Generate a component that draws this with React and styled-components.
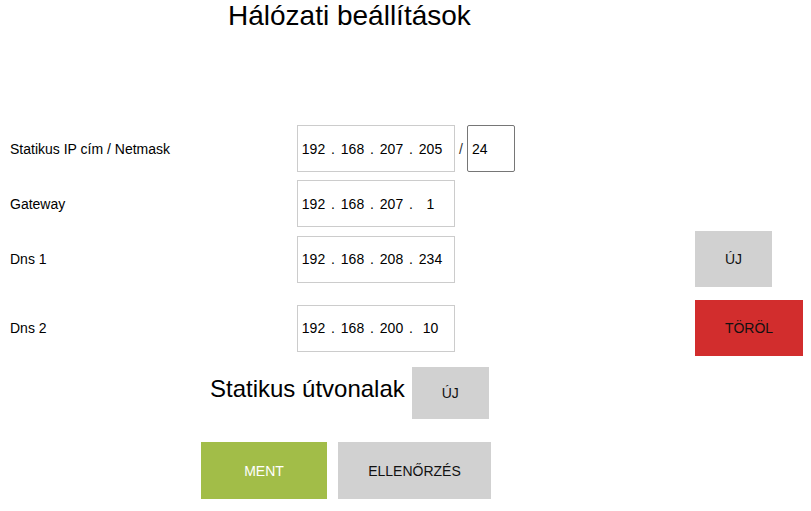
import React from 'react';
import styled, { createGlobalStyle } from 'styled-components';

const GlobalStyle = createGlobalStyle`
  body {
    margin: 0;
    font-family: "Liberation Sans", Arial, sans-serif;
    color: #000;
    background: #fff;
  }
`;

const rows = [
  { label: 'Statikus IP cím / Netmask', ip: ['192', '168', '207', '205'], mask: '24' },
  { label: 'Gateway', ip: ['192', '168', '207', '1'] },
  { label: 'Dns 1', ip: ['192', '168', '208', '234'], action: 'new', tall: true },
  { label: 'Dns 2', ip: ['192', '168', '200', '10'], action: 'delete', tall: true },
];

const IpField = ({ ip }) => (
  <IpBox>
    {ip.map((part, i) => (
      <React.Fragment key={i}>
        {i > 0 && <Dot>.</Dot>}
        <Octet defaultValue={part} />
      </React.Fragment>
    ))}
  </IpBox>
);

const App = () => {
  return (
    <Page>
      <GlobalStyle />
      <Title>Hálózati beállítások</Title>

      <Form>
        {rows.map((row) => (
          <Row key={row.label} $tall={row.tall}>
            <Label>{row.label}</Label>
            <Fields>
              <IpField ip={row.ip} />
              {row.mask && (
                <>
                  <Slash>/</Slash>
                  <Mask defaultValue={row.mask} />
                </>
              )}
            </Fields>
            <div>
              {row.action === 'new' && <Button $w={77}>ÚJ</Button>}
              {row.action === 'delete' && (
                <Button $w={108} $variant="danger">
                  TÖRÖL
                </Button>
              )}
            </div>
          </Row>
        ))}
      </Form>

      <Routes>
        <SubTitle>Statikus útvonalak</SubTitle>
        <Button $w={77} $h={52}>
          ÚJ
        </Button>
      </Routes>

      <Actions>
        <Button $w={126} $h={57} $variant="save">
          MENT
        </Button>
        <Button $w={153} $h={57}>
          ELLENŐRZÉS
        </Button>
      </Actions>
    </Page>
  );
};

const Page = styled.div`
  width: 811px;
`;

const Title = styled.h1`
  margin: 0;
  padding-left: 228px;
  font-size: 28px;
  line-height: 32px;
  font-weight: 400;
`;

const Form = styled.div`
  display: flex;
  flex-direction: column;
  margin-top: 93px;
`;

const Row = styled.div`
  display: grid;
  grid-template-columns: 297px 398px auto;
  align-items: center;
  height: ${(p) => (p.$tall ? '56px' : '47px')};
  margin-bottom: 8px;

  &:nth-child(2) {
    margin-bottom: 4px;
  }
  &:nth-child(3) {
    margin-bottom: 13px;
  }
`;

const Label = styled.span`
  padding-left: 10px;
  font-size: 14px;
`;

const Fields = styled.div`
  display: flex;
  align-items: center;
`;

const IpBox = styled.div`
  display: flex;
  align-items: center;
  box-sizing: border-box;
  width: 158px;
  height: 47px;
  border: 1px solid #cccccc;
  background: #fff;
`;

const Octet = styled.input`
  width: 31px;
  padding: 0;
  border: none;
  outline: none;
  background: transparent;
  text-align: center;
  font: 14px "Liberation Sans", Arial, sans-serif;
  color: #000;
`;

const Dot = styled.span`
  width: 8px;
  text-align: center;
  font-size: 14px;
`;

const Slash = styled.span`
  margin: 0 4px;
  width: 4px;
  font-size: 14px;
  color: #333;
`;

const Mask = styled.input`
  box-sizing: border-box;
  width: 48px;
  height: 47px;
  padding: 0 0 0 4px;
  border: 1px solid #767676;
  border-radius: 2px;
  outline: none;
  font: 14px "Liberation Sans", Arial, sans-serif;
  color: #000;
`;

const Button = styled.button`
  width: ${(p) => p.$w}px;
  height: ${(p) => p.$h || 56}px;
  padding: 0;
  border: none;
  border-radius: 0;
  cursor: pointer;
  font: 14px "Liberation Sans", Arial, sans-serif;
  background: ${(p) =>
    p.$variant === 'danger' ? '#d22d2d' : p.$variant === 'save' ? '#a2bd48' : '#d1d1d1'};
  color: ${(p) => (p.$variant === 'save' ? '#fff' : '#111')};
`;

const Routes = styled.div`
  display: flex;
  align-items: center;
  gap: 7px;
  margin-top: 3px;
  padding-left: 210px;
`;

const SubTitle = styled.h2`
  margin: 0;
  padding-bottom: 8px;
  font-size: 24px;
  font-weight: 400;
  line-height: 28px;
`;

const Actions = styled.div`
  display: flex;
  gap: 11px;
  margin-top: 23px;
  padding-left: 201px;
`;

export default App;
